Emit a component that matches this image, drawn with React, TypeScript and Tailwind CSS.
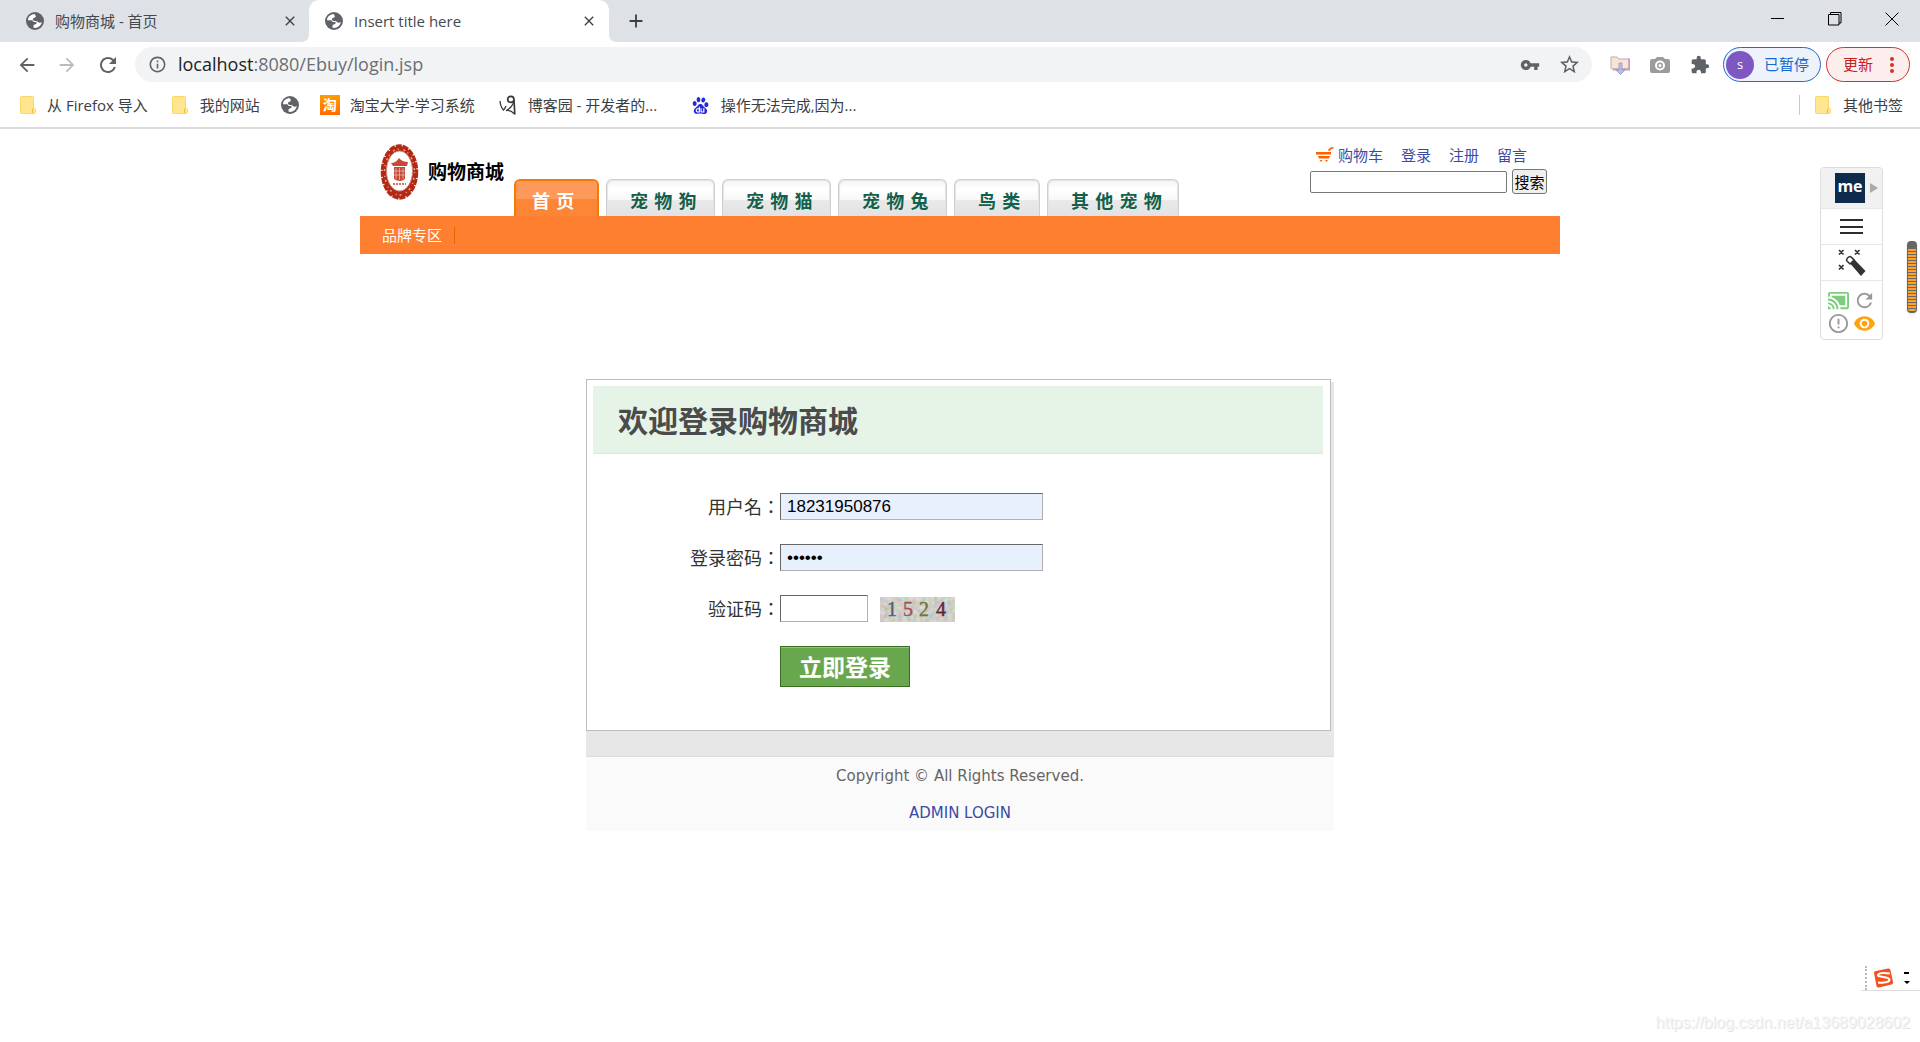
import { useState } from 'react';
import { MdArrowBack, MdArrowForward, MdRefresh, MdInfoOutline, MdVpnKey, MdStarBorder, MdExtension, MdClose, MdAdd, MdCastConnected, MdErrorOutline, MdVisibility } from 'react-icons/md';
import { SiBaidu } from 'react-icons/si';

const navTabs = [
  { name: '首 页', width: 'w-[85px] pl-4', active: true },
  { name: '宠 物 狗', width: 'w-[109px] pl-[23px]', active: false },
  { name: '宠 物 猫', width: 'w-[109px] pl-[23px]', active: false },
  { name: '宠 物 兔', width: 'w-[109px] pl-[23px]', active: false },
  { name: '鸟 类', width: 'w-[86px] pl-[23px]', active: false },
  { name: '其 他 宠 物', width: 'w-[132px] pl-[23px]', active: false },
];

const userLinks = ['登录', '注册', '留言'];

function Globe() {
  return (
    <svg className="w-[18px] h-[18px] shrink-0" viewBox="0 0 18 18">
      <circle cx="9" cy="9" r="9" fill="#5f6368" />
      <path d="M8.6 2.1c-3 .2-5.700 2-6.500 4.700l-.1 1.400 3.300.1c1.300 0 2 .7 2.200 1.600h2.100c.8 0 1.200.6 1 1.300-.2.800-1 1-1.900 1.200-.9.300-1.300.9-1.200 1.800l.1 1.600c4.200.8 7.700-1.900 8.200-5.700-.9.700-1.900.8-3 .4-1.200-.5-1.600-1.300-2.800-1.400-1.300-.1-2.600-.2-3-1.300-.3-1.100.4-1.900 1.500-2.100 1-.2 1.400-.6 1.300-1.600z" fill="#fff" />
    </svg>
  );
}

function Folder() {
  return (
    <svg className="w-4 h-[18px] shrink-0" viewBox="0 0 16 18">
      <path d="M1.500.5h11q1 0 1 1v11h1q1 0 1 1v3q0 1-1 1h-13q-1 0-1-1v-15q0-1 1-1z" fill="#ffe68f" stroke="#f8d667" />
      <path d="M12.500 17v-3.500q0-1 1-1" fill="none" stroke="#e8bd3c" />
    </svg>
  );
}

function BrowserTabs() {
  return (
    <div className="flex h-[42px] bg-[#dee1e6] text-[15px] text-[#45494d]">
      <div className="flex w-[309px] items-center pl-[26px] pr-[11px]">
        <Globe />
        <span className="ml-[11px] flex-1">购物商城 - 首页</span>
        <button aria-label="关闭" className="text-[#3c4043]"><MdClose size={16} /></button>
      </div>
      <div className="relative flex w-[300px] items-center rounded-t-[10px] bg-white pl-4 pr-3">
        <svg className="absolute bottom-0 -left-2 h-2 w-2" viewBox="0 0 8 8"><path d="M8 0v8H0q8 0 8-8z" fill="#fff" /></svg>
        <svg className="absolute bottom-0 -right-2 h-2 w-2" viewBox="0 0 8 8"><path d="M0 0v8h8q-8 0-8-8z" fill="#fff" /></svg>
        <Globe />
        <span className="ml-[11px] flex-1">Insert title here</span>
        <button aria-label="关闭" className="text-[#3c4043]"><MdClose size={16} /></button>
      </div>
      <button aria-label="新标签页" className="ml-4 text-[#3c4043]"><MdAdd size={22} /></button>
      <div className="ml-auto flex items-center gap-[43px] pb-[5px] pr-[21px]">
        <button aria-label="最小化">
          <svg className="h-[14px] w-[14px]" viewBox="0 0 14 14" stroke="#000" fill="none"><path d="M0 6.500h13" /></svg>
        </button>
        <button aria-label="还原">
          <svg className="h-[14px] w-[14px]" viewBox="0 0 14 14" stroke="#000" fill="none"><path d="M.5 2.500h10.500v10.500H.5zM2.500 2.500v-2h10.500v10.500h-2" /></svg>
        </button>
        <button aria-label="关闭窗口">
          <svg className="h-[14px] w-[14px]" viewBox="0 0 14 14" stroke="#000" fill="none"><path d="M.5.5l13 13M13.500.5l-13 13" /></svg>
        </button>
      </div>
    </div>
  );
}

function Toolbar() {
  return (
    <div className="flex h-[45px] items-center bg-white pl-4 pr-[10px] text-[#5f6368]">
      <button aria-label="后退"><MdArrowBack size={22} /></button>
      <button aria-label="前进" className="ml-[18px] text-[#babcbe]"><MdArrowForward size={22} /></button>
      <button aria-label="刷新" className="ml-[18px]"><MdRefresh size={24} /></button>
      <div className="ml-[15px] flex h-[35px] flex-1 items-center rounded-full bg-[#f1f3f4] pl-[13px] pr-[11px]">
        <MdInfoOutline size={19} />
        <div className="ml-[11px] flex-1 pb-[2px] text-[18px] leading-6 text-[#6b6f73]"><span className="text-[#202124]">localhost</span>:8080/Ebuy/login.jsp</div>
        <button aria-label="密码"><MdVpnKey size={20} /></button>
        <button aria-label="收藏" className="ml-[18px]"><MdStarBorder size={23} /></button>
      </div>
      <div className="ml-[18px] flex items-center gap-5">
        <svg className="h-5 w-5" viewBox="0 0 20 20">
          <path d="M1 2h6l2 2h10v10H2q-1 0-1-1z" fill="#f6e5d5" stroke="#c8a3bd" />
          <path d="M18 4.500h1.500v10H3" fill="none" stroke="#c29cb8" strokeWidth="2" />
          <path d="M9 8h3v7h3l-4.500 4.500L6 15h3z" fill="#b9bde8" stroke="#8b8fc6" strokeWidth=".7" />
        </svg>
        <svg className="h-5 w-5" viewBox="0 0 20 20">
          <path d="M2 4h3l2-2h6l2 2h3q2 0 2 2v10q0 2-2 2H2q-2 0-2-2V6q0-2 2-2z" fill="#9b9b9b" />
          <circle cx="10" cy="10.500" r="4" fill="#9b9b9b" stroke="#fff" strokeWidth="2" />
          <circle cx="10" cy="10.500" r="1.500" fill="#fff" />
        </svg>
        <MdExtension size={20} />
      </div>
      <button className="ml-[13px] flex h-[35px] w-[98px] items-center rounded-full border border-[#1f69d2] bg-[#edf2fb] pl-[2px] text-[15px] text-[#1967d2]">
        <span className="flex h-7 w-7 items-center justify-center rounded-full bg-[#7e57c2] text-[13px] text-white">s</span>
        <span className="ml-[10px]">已暂停</span>
      </button>
      <button className="ml-[5px] flex h-[35px] w-[84px] items-center rounded-full border border-[#d0342c] bg-[#fceeed] pl-4 text-[15px] text-[#c5221f]">
        更新
        <svg className="ml-[17px] h-4 w-1" viewBox="0 0 4 16" fill="#d93025"><circle cx="2" cy="2" r="2" /><circle cx="2" cy="8" r="2" /><circle cx="2" cy="14" r="2" /></svg>
      </button>
    </div>
  );
}

function Bookmarks() {
  return (
    <div className="flex h-[42px] items-center border-b-2 border-[#dadce0] bg-white pb-1 pl-5 pr-[17px] text-[15px] text-[#3c4043]">
      <a href="#" className="flex items-center gap-[11px]"><Folder />从 Firefox 导入</a>
      <a href="#" className="ml-6 flex items-center gap-3"><Folder />我的网站</a>
      <a href="#" aria-label="书签" className="ml-[21px]"><Globe /></a>
      <a href="#" className="ml-[21px] flex items-center gap-[10px]">
        <span className="flex h-5 w-5 items-center justify-center bg-gradient-to-b from-[#ff9c00] to-[#ff6a00] text-[14px] leading-5 font-bold text-white">淘</span>
        淘宝大学-学习系统
      </a>
      <a href="#" className="ml-6 flex w-[172px] items-center gap-[11px]">
        <svg className="h-[20px] w-[18px] shrink-0" viewBox="0 0 18 20" fill="none" stroke="#3d3838">
          <path d="M1 6q.5 6 3.500 9q1.500-1.500 2.500-4" strokeWidth="1.300" />
          <path d="M15 4.500c0-4-6-4.500-6.300 0 0 3.500 6 4 6.300 0l.8 15" strokeWidth="1.700" />
          <path d="M14.500 8q-3 6-7.500 7.500 4.500-1 8.500 3.500" strokeWidth="1.300" />
        </svg>
        博客园 - 开发者的...
      </a>
      <a href="#" className="ml-[21px] flex items-center gap-3"><SiBaidu size={17} color="#2529d8" />操作无法完成,因为...</a>
      <div className="ml-auto flex items-center gap-[15px]">
        <span className="h-5 w-px bg-[#c6c8ca]" />
        <a href="#" className="flex items-center gap-3"><Folder />其他书签</a>
      </div>
    </div>
  );
}

function Logo() {
  return (
    <a href="#" className="flex w-[154px] items-center gap-[9px] pb-[15px] pl-5">
      <svg className="h-[58px] w-[39px] shrink-0" viewBox="0 0 39 58">
        <ellipse cx="19.500" cy="29" rx="17" ry="26" fill="#b32a14" stroke="#b32a14" strokeWidth="3.500" strokeDasharray="6 1" />
        <ellipse cx="19.500" cy="29" rx="15" ry="23" fill="none" stroke="#e3a297" strokeWidth="1.500" strokeDasharray="1 5 2 3" />
        <ellipse cx="19.500" cy="28" rx="13" ry="20" fill="#fff" stroke="#d98879" />
        <path d="M11 20q5 0 8-5 3 4 9 4l-1 4H13zM14 24h11v12q-5 4-11 0z" fill="#c44a36" />
        <path d="M16 25v11M19.500 25v12M23 25v11M14 28h11M14 32h11" stroke="#efc1b8" strokeWidth=".7" />
        <path d="M13 41h13" stroke="#c44a36" strokeWidth="1.500" strokeDasharray="2 1" />
      </svg>
      <span className="whitespace-nowrap text-[19px] leading-6 font-bold text-black">购物商城</span>
    </a>
  );
}

function SiteHeader() {
  return (
    <header className="mx-auto max-w-[1200px]">
      <div className="flex h-[87px] items-end">
        <Logo />
        <nav className="flex gap-[7px] font-['DejaVu_Sans','Noto_Sans_CJK_SC',sans-serif] text-[18px] font-bold">
          {navTabs.map((tab) => (
            <a
              key={tab.name}
              href="#"
              className={`flex h-[37px] items-center whitespace-nowrap rounded-t-[6px] border-b-0 pt-[6px] ${tab.width} ${
                tab.active
                  ? 'border-2 border-[#f57a08] bg-[linear-gradient(#fd9a5a_0_50%,#fd8636_50%)] text-white'
                  : 'border border-[#cfcfcf] bg-[linear-gradient(#f4f4f4,#ffffff_25%,#f8f8f8_55%,#e9e9e9_57%,#e2e2e2)] text-[#11604b] shadow-[inset_1px_1px_1px_#e4e4e4,inset_-1px_0_1px_#e4e4e4]'
              }`}
            >
              {tab.name}
            </a>
          ))}
        </nav>
        <div className="ml-auto mr-[13px] self-start pt-[14px]">
          <div className="flex h-6 items-center gap-[18px] pl-[6px] text-[15px] text-[#3b4ba5]">
            <a href="#" className="flex items-center gap-1">
              <svg className="h-4 w-[18px]" viewBox="0 0 18 16" fill="#ff6000">
                <path d="M12 3.500q1-3.500 5.500-3.500v1.500q-3 0-3.500 2.500zM0 5h15v2.500H0z" />
                <path d="M2 9h12l-1 2.500H3zM3.500 13h3l-1.500 2zM9 13h3l-1.500 2z" />
              </svg>
              购物车
            </a>
            {userLinks.map((link) => (
              <a key={link} href="#">{link}</a>
            ))}
          </div>
          <form className="mt-[2px] flex items-center gap-[5px] text-[15px]" onSubmit={(e) => e.preventDefault()}>
            <input type="text" aria-label="搜索" className="h-[22px] w-[197px] rounded-[2px] border border-[#767676] bg-white px-1" />
            <button className="h-[25px] w-[35px] whitespace-nowrap rounded-[3px] border border-[#767676] bg-[#efefef] text-center leading-5 text-black">搜索</button>
          </form>
        </div>
      </div>
      <div className="flex h-[38px] items-center bg-[#ff7f31] pl-[22px]">
        <a href="#" className="border-r border-[#e06a00] pr-3 text-[15px] leading-[17px] text-white">品牌专区</a>
      </div>
    </header>
  );
}

function Captcha() {
  return (
    <svg className="ml-3 h-[25px] w-[75px]" viewBox="0 0 75 25" role="img" aria-label="1524">
      <filter id="grain">
        <feTurbulence type="fractalNoise" baseFrequency="0.22" numOctaves="2" seed="7" />
        <feColorMatrix values="0.6 0 0 0 0.32  0 0.5 0 0 0.37  0 0 0.6 0 0.27  0 0 0 0 1" />
      </filter>
      <rect width="75" height="25" filter="url(#grain)" />
      <g className="font-['Liberation_Serif',serif] text-[20px]" strokeWidth=".4">
        <text x="7" y="19" fill="#5a5c74" stroke="#5a5c74">1</text>
        <text x="23" y="19" fill="#a1505c" stroke="#a1505c">5</text>
        <text x="39" y="19" fill="#77723a" stroke="#77723a">2</text>
        <text x="56" y="19" fill="#57273d" stroke="#57273d">4</text>
      </g>
    </svg>
  );
}

function LoginForm() {
  const [userName, setUserName] = useState('18231950876');
  const [password, setPassword] = useState('123456');
  const [code, setCode] = useState('');

  // the TC face keeps the full-width colon centred
  const label = "w-[187px] shrink-0 text-right font-['Noto_Sans_CJK_TC',sans-serif] text-[18px] leading-[27px] text-[#333]";
  const field = "h-[27px] border border-[#b0b0b0] border-t-[#666] border-l-[#666] px-[6px] font-['Liberation_Sans',sans-serif] text-[17px] text-black";

  return (
    <main className="mx-auto mt-[125px] max-w-[748px]">
      <div className="border-b border-[#ddd] bg-[linear-gradient(#fff_0_3px,#e7e7e7_3px)] pb-[25px] pr-[3px]">
        <div className="border border-[#bdbdbd] bg-white px-[6px] pt-[6px] pb-[43px]">
          <h1 className="mr-px h-[68px] border-b border-[#dfe8e0] bg-[#e6f4e8] pl-[25px] text-[30px] leading-[70px] font-bold text-[#4b4b4b]">欢迎登录购物商城</h1>
          <form className="mt-[39px] flex flex-col gap-6" onSubmit={(e) => e.preventDefault()}>
            <div className="flex">
              <label htmlFor="userName" className={label}>用户名：</label>
              <input id="userName" type="text" value={userName} onChange={(e) => setUserName(e.target.value)} className={`w-[263px] bg-[#e8f0fe] ${field}`} />
            </div>
            <div className="flex">
              <label htmlFor="passWord" className={label}>登录密码：</label>
              <input id="passWord" type="password" value={password} onChange={(e) => setPassword(e.target.value)} className={`w-[263px] bg-[#e8f0fe] ${field}`} />
            </div>
            <div className="flex items-end">
              <label htmlFor="veryCode" className={label}>验证码：</label>
              <input id="veryCode" type="text" value={code} onChange={(e) => setCode(e.target.value)} className={`w-[88px] bg-white ${field}`} />
              <Captcha />
            </div>
            <button className="ml-[187px] h-[41px] w-[130px] border border-[#3b6e22] bg-[#69a74e] text-[23px] leading-8 font-bold text-white shadow-[inset_0_1px_0_#95c080]">立即登录</button>
          </form>
        </div>
      </div>
      <footer className="flex flex-col items-center gap-[13px] bg-[#fafafa] pt-[7px] pb-[6px] font-['DejaVu_Sans',sans-serif] text-[15px] leading-6 text-[#666]">
        <p>Copyright © All Rights Reserved.</p>
        <a href="#" className="text-[#3b4ba5]">ADMIN LOGIN</a>
      </footer>
    </main>
  );
}

// floating panel of the translation extension, plus the scroll marker next to it
function SidePanel() {
  return (
    <>
      <aside className="absolute right-[37px] top-[167px] w-[63px] rounded-[4px] border border-[#ddd] bg-white">
        <div className="flex h-[41px] items-center rounded-t-[4px] border-b border-[#e8e8e8] bg-[#f1f1f1] pl-[14px]">
          <span className="flex h-[30px] w-[30px] shrink-0 items-center justify-center bg-[#0f2b4c] pb-1 font-['Open_Sans',sans-serif] text-[16px] leading-6 font-bold text-white">me</span>
          <svg className="ml-[5px] h-[10px] w-2" viewBox="0 0 8 10"><path d="M0 0l8 5-8 5z" fill="#aaa" /></svg>
        </div>
        <div className="flex h-9 items-center justify-center border-b border-[#e8e8e8]">
          <svg className="h-4 w-6" viewBox="0 0 24 16" fill="#2d2d2d"><path d="M0 0h23v2H0zM0 7h23v2H0zM0 13h23v2H0z" /></svg>
        </div>
        <div className="flex h-9 items-center justify-center border-b border-[#e8e8e8]">
          <svg className="h-7 w-7" viewBox="0 0 28 28">
            <path d="M10 12l4-4L27.500 22l-4.500 5z" fill="#333" />
            <path d="M8.500 11.500q.5-3.500 4-4l3.500 3.500-4 4z" fill="#fff" stroke="#333" strokeWidth="1.500" />
            <path d="M1 1l4.500 4.500M5.500 1L1 5.500M17 1l4.500 4.500M21.500 1L17 5.500M1 16l4.500 4.500M5.500 16L1 20.500" stroke="#333" strokeWidth="1.700" />
          </svg>
        </div>
        <div className="grid h-[58px] grid-cols-2 content-center justify-items-center px-[5px] pt-1 text-[#999]">
          <MdCastConnected size={23} color="#7bcf7b" />
          <MdRefresh size={23} />
          <MdErrorOutline size={23} />
          <MdVisibility size={23} color="#ffa20f" />
        </div>
      </aside>
      <div className="absolute right-[3px] top-[241px] h-[72px] w-[10px] rounded-[4px] border-x border-t-8 border-b-2 border-[#666] bg-[repeating-linear-gradient(#ffa42b_0_2px,#666_2px_3px)] shadow-sm" />
    </>
  );
}

function InputMethodBar() {
  return (
    <div className="absolute right-0 bottom-[51px] flex h-[25px] w-[59px] items-center border-b border-[#ddd] pl-1">
      <span className="h-full border-l-2 border-dotted border-[#bbb]" />
      <svg className="ml-[6px] h-5 w-5" viewBox="0 0 20 20">
        <path d="M1 5q0-2 2-2L15 .5q2-.5 2.500 1.500L20 14q.3 2-1.500 2.500L6 19.500q-2 .3-2.500-1.500z" fill="#f4511e" />
        <path d="M17 5.500Q6 4 5 7c-.8 2.500 11 1.500 11.500 4.500.2 3-6 3.500-11.500 3" fill="none" stroke="#fff" strokeWidth="2" />
      </svg>
      <svg className="ml-[11px] h-3 w-[6px]" viewBox="0 0 6 12"><path d="M0 0h5v2H0zM0 9h6l-3 3z" /></svg>
    </div>
  );
}

export default function App() {
  return (
    <div className="relative min-h-screen overflow-hidden bg-white font-['Open_Sans','Noto_Sans_CJK_SC',sans-serif]">
      <BrowserTabs />
      <Toolbar />
      <Bookmarks />
      <SiteHeader />
      <LoginForm />
      <SidePanel />
      <InputMethodBar />
      <p className="absolute right-[10px] bottom-[7px] font-['Liberation_Sans',sans-serif] text-[16px] leading-6 text-[#f6f6f6] [text-shadow:1px_1px_0_#e4e4e4]">https://blog.csdn.net/a13689028602</p>
    </div>
  );
}
